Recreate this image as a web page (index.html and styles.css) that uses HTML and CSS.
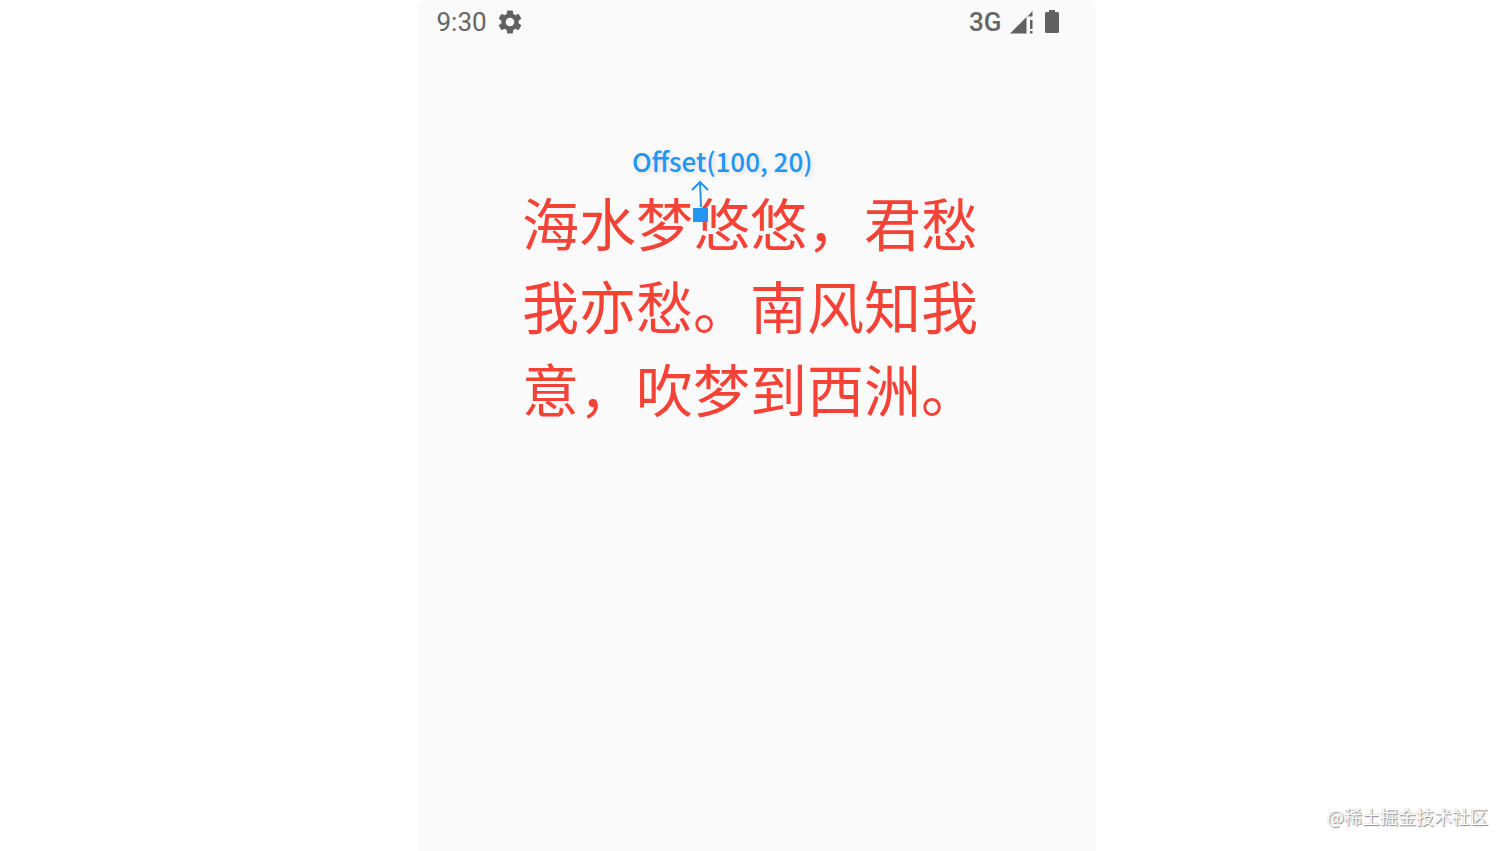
FILE: index.html
```
<!DOCTYPE html>
<html lang="zh-CN">
<head>
<meta charset="utf-8">
<meta name="viewport" content="width=device-width, initial-scale=1">
<title>Offset(100, 20)</title>
<link rel="stylesheet" href="styles.css">
</head>
<body>
<main class="screen">
  <header class="status-bar">
    <div class="status-group">
      <span class="clock">9:30</span>
      <svg class="gear" viewBox="2 2 20 20" aria-hidden="true"><path d="M19.14 12.94c.04-.3.06-.61.06-.94 0-.32-.02-.64-.07-.94l2.03-1.58a.49.49 0 0 0 .12-.61l-1.92-3.32a.488.488 0 0 0-.59-.22l-2.39.96c-.5-.38-1.03-.7-1.62-.94l-.36-2.54a.484.484 0 0 0-.48-.41h-3.84c-.24 0-.43.17-.47.41l-.36 2.54c-.59.24-1.13.57-1.62.94l-2.39-.96c-.22-.08-.47 0-.59.22L2.74 8.87c-.12.21-.08.47.12.61l2.03 1.58c-.05.3-.09.63-.09.94s.02.64.07.94l-2.03 1.58a.49.49 0 0 0-.12.61l1.92 3.32c.12.22.37.29.59.22l2.39-.96c.5.38 1.03.7 1.62.94l.36 2.54c.05.24.24.41.48.41h3.84c.24 0 .44-.17.47-.41l.36-2.54c.59-.24 1.13-.56 1.62-.94l2.39.96c.22.08.47 0 .59-.22l1.92-3.32c.12-.22.07-.47-.12-.61l-2.01-1.58zM12 15.6A3.61 3.61 0 0 1 8.4 12c0-1.98 1.62-3.6 3.6-3.6s3.6 1.62 3.6 3.6-1.62 3.6-3.6 3.6z"/></svg>
    </div>
    <div class="status-group">
      <span class="network">3G</span>
      <svg class="signal" viewBox="0 0 23 23" aria-hidden="true"><path d="M0 22.500 16.500 6v16.500zM17.500 5.500 22.500 0v5.500zM20 9h2.500v9H20zM20 20h2.500v2.500H20z"/></svg>
      <svg class="battery" viewBox="0 0 14 24" aria-hidden="true"><path d="M4 0h6v2h2.500q1.500 0 1.500 1.500v18q0 1.500-1.500 1.500h-11Q0 23 0 21.500v-18Q0 2 1.500 2H4z"/></svg>
    </div>
  </header>
  <section class="stage">
    <p class="poem">海水梦悠悠，君愁我亦愁。南风知我意，吹梦到西洲。</p>
    <div class="marker">
      <span class="marker-label">Offset(100, 20)</span>
      <svg class="marker-arrow" viewBox="0 0 20 28" aria-hidden="true"><path d="M2 10 10 2l8 8M10 2l1 25"/></svg>
      <span class="marker-dot"></span>
    </div>
  </section>
</main>
<footer class="watermark">@稀土掘金技术社区</footer>
</body>
</html>
```

FILE: styles.css
```
* {
  box-sizing: border-box;
}

body {
  margin: 0;
  min-height: 100vh;
  display: flex;
  justify-content: center;
  background: #ffffff;
  font-family: Roboto, "Noto Sans CJK SC", sans-serif;
}

.screen {
  width: 100%;
  max-width: 677px;
  min-height: 100vh;
  background: #fafafa;
  border-radius: 6px 6px 0 0;
}

.status-bar {
  display: flex;
  justify-content: space-between;
  height: 44px;
  padding: 0 36px 0 19px;
  color: #666666;
  font-size: 26px;
}

.status-group {
  display: flex;
  align-items: center;
}

.status-group svg {
  fill: #616161;
}

.network {
  font-weight: 500;
}

.gear {
  width: 24px;
  height: 24px;
  margin-left: 11px;
}

.signal {
  width: 23px;
  height: 23px;
  margin: 0 12px 0 8px;
}

.battery {
  width: 14px;
  height: 24px;
}

.stage {
  position: relative;
  width: 468px;
  max-width: 100%;
  margin: 136px auto 0;
}

.poem {
  margin: 0;
  color: #f44336;
  font-family: "Noto Sans CJK SC", sans-serif;
  font-size: 57px;
  line-height: 83px;
}

.marker {
  position: absolute;
  top: -38px;
  left: 110px;
  color: #2196f3;
}

.marker-label {
  display: block;
  font-family: "Noto Sans CJK SC", sans-serif;
  font-size: 26px;
  font-weight: 500;
  line-height: 38px;
  white-space: nowrap;
  text-shadow: 2px 2px 4px #dddddd;
}

.marker-arrow {
  display: block;
  width: 20px;
  height: 28px;
  margin-left: 58px;
  fill: none;
  stroke: #2196f3;
  stroke-width: 2;
}

.marker-dot {
  display: block;
  width: 15px;
  height: 14px;
  margin-left: 61px;
  background: #2196f3;
}

.watermark {
  position: absolute;
  right: 24px;
  bottom: 21px;
  color: #ffffff;
  font-family: "Noto Sans CJK SC", sans-serif;
  font-size: 18px;
  line-height: 28px;
  text-shadow: 1px 1px 1px #888888, 0 0 1px #aaaaaa;
}
```
